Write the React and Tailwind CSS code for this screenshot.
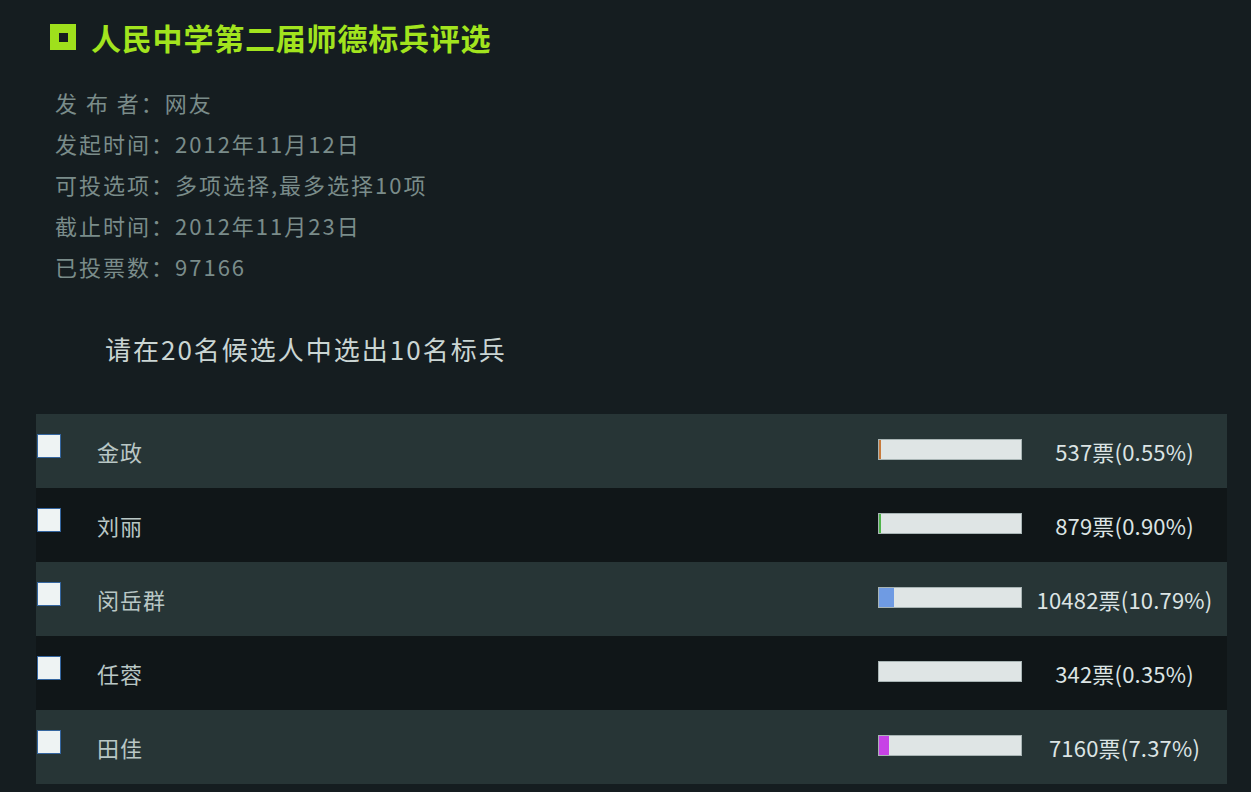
import React from "react";

const rows = [
  { name: "金政", votes: "537票(0.55%)", pct: 0.55, color: "#c77a3c", minw: 2 },
  { name: "刘丽", votes: "879票(0.90%)", pct: 0.9, color: "#4fb34a", minw: 2 },
  { name: "闵岳群", votes: "10482票(10.79%)", pct: 10.79, color: "#6f9be3", minw: 0 },
  { name: "任蓉", votes: "342票(0.35%)", pct: 0.35, color: "#dfe5e5", minw: 0 },
  { name: "田佳", votes: "7160票(7.37%)", pct: 7.37, color: "#c743e6", minw: 0 },
];

const font = { fontFamily: '"Noto Sans CJK SC", "Noto Sans", sans-serif' };

export default function App() {
  return (
    <div
      className="w-[1251px] h-[792px] bg-[#151d20] overflow-hidden flex flex-col pt-[18px]"
      style={font}
    >
      <div className="flex items-center h-[38px] pl-[50px]">
        <div className="w-[26px] h-[26px] bg-[#9fe01c] flex items-center justify-center">
          <div className="w-[9px] h-[9px] bg-[#151d20]" />
        </div>
        <div className="ml-[15px] text-[30px] font-bold leading-[38px] tracking-[0.8px] text-[#a2e41e]">
          人民中学第二届师德标兵评选
        </div>
      </div>

      <div className="mt-[26px] pl-[55px] text-[22px] leading-[41px] text-[#7a8c8a] tracking-[2px]">
        <div>发&nbsp;布&nbsp;者：网友</div>
        <div>发起时间：2012年11月12日</div>
        <div>可投选项：多项选择,最多选择10项</div>
        <div>截止时间：2012年11月23日</div>
        <div>已投票数：97166</div>
      </div>

      <div className="mt-[42px] pl-[105px] text-[26px] leading-[40px] text-[#cad5d3] tracking-[2px]">
        请在20名候选人中选出10名标兵
      </div>

      <div className="mt-[45px] ml-[36px] w-[1191px] flex flex-col">
        {rows.map((r, i) => (
          <div
            key={r.name}
            className={`h-[74px] flex items-center ${i % 2 === 0 ? "bg-[#273536]" : "bg-[#101618]"}`}
          >
            <div className="ml-[1px] -mt-[11px] w-[24px] h-[24px] bg-[#eef3f3] border border-[#3566a0] shrink-0" />
            <div className="ml-[36px] flex-1 text-[22px] text-[#b9c7c5] tracking-[1px]">{r.name}</div>
            <div className="w-[144px] h-[21px] bg-[#dfe5e5] border border-[#a8b4b4] -mt-[4px] flex shrink-0">
              <div
                className="h-full"
                style={{
                  width: `${Math.max((r.pct / 100) * 142, r.minw)}px`,
                  backgroundColor: r.color,
                }}
              />
            </div>
            <div className="w-[205px] shrink-0 text-center text-[22px] text-[#dce4e4] tracking-[0.2px]">
              {r.votes}
            </div>
          </div>
        ))}
      </div>
    </div>
  );
}
